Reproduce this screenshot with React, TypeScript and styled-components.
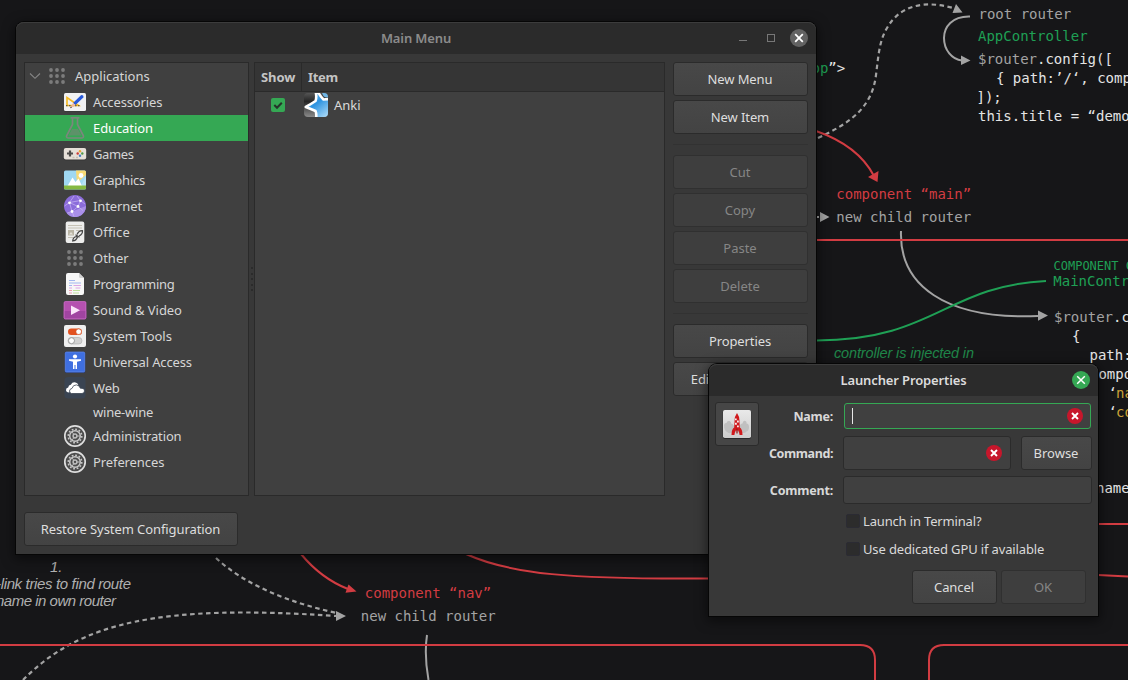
import React from 'react';
import styled, { createGlobalStyle, css } from 'styled-components';

const GlobalStyle = createGlobalStyle`
  * { box-sizing: border-box; }
  html, body { margin: 0; padding: 0; background: #161618; overflow: hidden; }
  body { font-family: "Noto Sans", "Open Sans", sans-serif; font-size: 13px; color: #dadada; }
`;

const Desktop = styled.main`
  position: relative;
  width: 1128px;
  height: 680px;
  overflow: hidden;
  background: #161618;
`;

const Wallpaper = styled.svg`
  display: block;
  width: 1128px;
  height: 680px;
`;

const Window = styled.section<{ $x: number; $y: number; $w: number; $h: number }>`
  position: absolute;
  left: ${p => p.$x}px;
  top: ${p => p.$y}px;
  width: ${p => p.$w}px;
  height: ${p => p.$h}px;
  display: flex;
  flex-direction: column;
  background: #383838;
  border-radius: 8px 8px 0 0;
  box-shadow: 0 0 0 1px #060606, 0 3px 12px 2px rgba(0, 0, 0, 0.5);
`;

const TitleBar = styled.header`
  flex: none;
  height: 32px;
  display: grid;
  grid-template-columns: 1fr auto 1fr;
  align-items: center;
  background: #2b2b2b;
  border-radius: 8px 8px 0 0;
  box-shadow: inset 0 1px 0 #3c3c3c;
`;

const Title = styled.h1<{ $active?: boolean }>`
  grid-column: 2;
  margin: 0;
  font-size: 13px;
  line-height: 18px;
  font-weight: 600;
  letter-spacing: -0.13px;
  color: ${p => (p.$active ? '#dcdcdc' : '#8b8b8b')};
`;

const TitleButtons = styled.div`
  display: flex;
  justify-content: flex-end;
  align-items: center;
  gap: 3px;
  padding-right: 7px;
  svg { display: block; }
`;

const Text = styled.span<{ $track?: number }>`
  white-space: nowrap;
  line-height: 18px;
  letter-spacing: ${p => p.$track ?? 0}px;
`;

const Button = styled.button<{ $w: number; $off?: boolean }>`
  flex: none;
  width: ${p => p.$w}px;
  height: 34px;
  padding: 0 1px 0 0;
  display: flex;
  align-items: center;
  justify-content: center;
  font: inherit;
  color: #dedede;
  border: 1px solid #2b2b2b;
  border-radius: 3px;
  background: linear-gradient(#484848, #434343);
  ${p => p.$off && css`
    color: #868686;
    background: #3e3e3e;
    border-color: #303030;
  `}
`;

const MainBody = styled.div`
  flex: 1;
  display: flex;
  flex-direction: column;
  align-items: flex-start;
  gap: 16px;
  padding: 8px 8px 8px;
`;

const Columns = styled.div`
  display: flex;
  width: 100%;
  height: 434px;
`;

const Pane = styled.div<{ $w: number }>`
  width: ${p => p.$w}px;
  height: 434px;
  border: 1px solid #2a2a2a;
  background: #404040;
`;

const Handle = styled.div`
  width: 5px;
  display: flex;
  flex-direction: column;
  align-items: center;
  justify-content: center;
  gap: 3.5px;
  padding-left: 1px;
`;

const HandleDot = styled.i`
  width: 2px;
  height: 2px;
  background: #2b2b2b;
`;

const TreeRow = styled.div<{ $h?: number; $selected?: boolean; $root?: boolean }>`
  display: flex;
  align-items: center;
  height: ${p => p.$h ?? 26}px;
  padding-left: ${p => (p.$root ? 4 : 38)}px;
  gap: 6px;
  color: ${p => (p.$selected ? '#ffffff' : '#d6d6d6')};
  background: ${p => (p.$selected ? '#35a854' : 'transparent')};
  svg { display: block; flex: none; }
  svg + svg { margin-left: -2px; }
`;

const IconGap = styled.span`
  width: 24px;
`;

const ListHead = styled.div`
  display: flex;
  height: 29px;
  background: #353535;
  border-bottom: 1px solid #2a2a2a;
  font-weight: 700;
  color: #c4c4c4;
`;

const HeadCell = styled.div<{ $w?: number }>`
  width: ${p => (p.$w ? p.$w + 'px' : 'auto')};
  display: flex;
  align-items: center;
  padding-left: 6px;
  border-right: ${p => (p.$w ? '1px solid #2a2a2a' : 'none')};
`;

const ListRow = styled.div`
  display: flex;
  align-items: center;
  height: 26px;
  padding-left: 16px;
  svg { display: block; }
  svg + svg { margin: 0 6px 0 19px; }
`;

const Actions = styled.div`
  display: flex;
  flex-direction: column;
  gap: 4px;
  margin-left: 8px;
`;

const Separator = styled.hr`
  width: 135px;
  height: 1px;
  margin: 6px 0;
  border: 0;
  background: #323232;
`;

const DialogBody = styled.div`
  flex: 1;
  display: grid;
  grid-template-columns: 44px 74px 249px;
  grid-template-rows: 28px 34px 28px;
  column-gap: 0;
  row-gap: 6px;
  padding: 6px;
  align-content: start;
`;

const IconButton = styled.button`
  grid-row: 1 / span 2;
  width: 44px;
  height: 44px;
  padding: 0;
  display: flex;
  align-items: center;
  justify-content: center;
  border: 1px solid #2b2b2b;
  border-radius: 3px;
  background: #464646;
`;

const FieldLabel = styled.label`
  grid-column: 2;
  align-self: center;
  justify-self: end;
  padding-top: 1px;
  font-weight: 700;
  font-size: 12.5px;
  color: #d8d8d8;
`;

const FieldRow = styled.div`
  grid-column: 3;
  margin-left: 10px;
  width: 249px;
  display: flex;
  justify-content: space-between;
`;

const Field = styled.div<{ $w: number; $h: number; $focus?: boolean }>`
  width: ${p => p.$w}px;
  height: ${p => (p.$focus ? p.$h - 2 : p.$h)}px;
  margin: ${p => (p.$focus ? '1px' : '0')};
  padding: 0 ${p => (p.$focus ? 7 : 8)}px;
  display: flex;
  align-items: center;
  justify-content: flex-end;
  border: 1px solid ${p => (p.$focus ? '#35a854' : '#2b2b2b')};
  border-radius: 3px;
  background: #404040;
`;

const Caret = styled.span`
  width: 1px;
  height: 16px;
  margin-right: auto;
  background: #e8e8e8;
`;

const Options = styled.div`
  grid-column: 3;
  display: flex;
  flex-direction: column;
  gap: 10px;
  padding: 2px 0 0 13px;
`;

const Option = styled.label`
  display: flex;
  align-items: center;
  gap: 3px;
  height: 18px;
`;

const Box = styled.span`
  width: 14px;
  height: 14px;
  border-radius: 2px;
  border: 1px solid #2b2b33;
  background: #2c2c2c;
`;

const DialogFooter = styled.footer`
  display: flex;
  justify-content: flex-end;
  gap: 4px;
  padding: 0 12px 12px;
`;

/* Small drawings ------------------------------------------------------- */

const CloseGlyph = ({ fill, weight }: { fill: string; weight: number }) => (
  <svg width="20" height="20" viewBox="0 0 20 20">
    <circle cx="10" cy="10" r="9" fill={fill} />
    <path d="M6.200 6.200l7.600 7.600M13.800 6.200l-7.600 7.600" stroke="#fff" strokeWidth={weight} />
  </svg>
);

const ErrorGlyph = () => (
  <svg width="16" height="16" viewBox="0 0 16 16">
    <circle cx="8" cy="8" r="8" fill="#c7162b" />
    <path d="M5 5l6 6M11 5l-6 6" stroke="#fff" strokeWidth="1.9" />
  </svg>
);

const DotGrid = () => (
  <svg width="24" height="24" viewBox="0 0 24 24" fill="#7c7c7c">
    {[6, 12, 18].map(y => [6, 12, 18].map(x => <circle key={`${x}-${y}`} cx={x} cy={y} r="1.9" />))}
  </svg>
);

const Gear = () => (
  <svg width="24" height="24" viewBox="0 0 24 24" fill="none">
    <circle cx="12" cy="12" r="10.2" fill="#4c4c4c" stroke="#dedede" strokeWidth="1.7" />
    <circle cx="12" cy="12" r="5.3" stroke="#c9c9c9" strokeWidth="1.5" />
    <circle cx="12" cy="12" r="6.8" stroke="#c9c9c9" strokeWidth="1.5" strokeDasharray="1.78 1.78" />
    <circle cx="12" cy="12" r="1.9" stroke="#bdbdbd" strokeWidth="1.5" />
    <path d="M9.300 8l1.500 2.500M9.300 16l1.500-2.500M14 12h3.5" stroke="#bdbdbd" strokeWidth="1" />
  </svg>
);

const Frame = ({ children }: { children: React.ReactNode }) => (
  <svg width="24" height="24" viewBox="0 0 24 24" fill="none">{children}</svg>
);

const icons: Record<string, React.ReactNode> = {
  accessories: (
    <Frame>
      <rect x="1" y="3.5" width="22" height="18" rx="1.5" fill="#2d2d2d" opacity=".5" />
      <rect x="1" y="3" width="22" height="18" rx="1.5" fill="#f1f1f2" />
      <path d="M4 7.5v8h11.5z" stroke="#f5b91f" strokeWidth="1.6" />
      <path d="M3 15.7h15" stroke="#444" strokeWidth="1" strokeDasharray="1.5 1.5" />
      <path d="M10 13L18 5.2q2.5-.5 2.6 2L12.5 15z" fill="#2759dc" />
      <path d="M10 13l2.5 2.2L7 18.2z" fill="#f3b79a" />
      <path d="M8 16.5l-1 1.8 2-.7z" fill="#383838" />
    </Frame>
  ),
  education: (
    <Frame>
      <path d="M9 13h6l3.500 6.500H5.500z" fill="#5d9269" />
      <path d="M9.500 2v6.500L3.700 19.500Q2.900 22 5.500 22h13q2.600 0 1.800-2.500L14.500 8.500V2" stroke="#7b877d" strokeWidth="1.700" />
      <path d="M7.500 1.800h9" stroke="#7b877d" strokeWidth="1.700" />
    </Frame>
  ),
  games: (
    <Frame>
      <rect x=".8" y="6.5" width="22.400" height="12" rx="2" fill="#2a2a2a" opacity=".5" />
      <rect x=".8" y="6" width="22.400" height="11.500" rx="2" fill="#e6e0d8" />
      <path d="M4 11.500h6M7 8.500v6" stroke="#4e4c4a" strokeWidth="2.200" />
      <circle cx="17" cy="9.200" r="1.200" fill="#eaa632" />
      <circle cx="14.700" cy="11.500" r="1.200" fill="#cf3a35" />
      <circle cx="19.300" cy="11.500" r="1.200" fill="#4f9a48" />
      <circle cx="17" cy="13.800" r="1.200" fill="#477cc3" />
      <path d="M9.500 15.500h2M13 15.500h2" stroke="#c6bfb3" strokeWidth="1.500" />
    </Frame>
  ),
  graphics: (
    <Frame>
      <rect x="1" y="2.500" width="22" height="19" rx="1.500" fill="#9fd8f2" />
      <path d="M13 2.500h8.500q1.500 0 1.500 1.500v3L14 15z" fill="#f8da74" />
      <path d="M18 18L23 8v10z" fill="#b7e1f5" />
      <circle cx="18" cy="7.500" r="2.400" fill="#fff" />
      <path d="M4.500 18l5-8.500 3 4.500 3-3.500L19 18z" fill="#fff" />
      <path d="M1 17.500h22V20q0 1.500-1.500 1.500h-19Q1 21.500 1 20z" fill="#86b942" />
    </Frame>
  ),
  internet: (
    <Frame>
      <circle cx="12" cy="12" r="11" fill="#8b6cda" />
      <path d="M23 12a11 11 0 0 1-19 7.500z" fill="#a98fe8" />
      <path d="M6.500 8.500l11-2-2.500 6zM6.500 8.500L9 17.500l6-5 5 4M1.500 12l5-3.500L11 2M17.500 6.500L22 10M9 17.500l2 5M17.500 6.500L14 2M9 17.500l-5 1.500" stroke="#c9b6f4" strokeWidth=".7" />
      <circle cx="6.500" cy="8.800" r="1.400" fill="#fff" />
      <circle cx="17.500" cy="6.800" r="1.400" fill="#fff" />
      <circle cx="15" cy="12.500" r="1.400" fill="#fff" />
      <circle cx="9" cy="17.500" r="1.400" fill="#fff" />
    </Frame>
  ),
  office: (
    <Frame>
      <rect x="2.700" y="1.500" width="18.600" height="21.500" rx="2" fill="#ededec" />
      <path d="M5 5.500h14M5 8h14M13 10.500h6M5 17.500h5" stroke="#c5c1b4" strokeWidth="1.100" />
      <rect x="5" y="10" width="6" height="5.500" fill="#bab5a5" />
      <path d="M6 14.500l2-2.500 2 2.500z" fill="#e5e2d8" />
      <path d="M14 14.500q2-4 5.500-3.800.3 3.300-3.500 5.300M13.500 16.500q-3.500.5-3.800 4.500 3.500-.3 4.800-4z" stroke="#454545" strokeWidth="1.200" />
      <path d="M12.500 14.800l4 2.400" stroke="#454545" strokeWidth="1.200" />
    </Frame>
  ),
  programming: (
    <Frame>
      <path d="M3 3q0-2 2-2h11l5 5v15q0 2-2 2H5q-2 0-2-2z" fill="#f7f7f7" />
      <path d="M16 1v3.500q0 1.500 1.500 1.500H21z" fill="#d2d2d2" />
      <path d="M6 8.500h6M6 11h12M6 13.500h3" stroke="#a1b7ef" />
      <path d="M10.500 13.500h7.500M6 16h3M12.500 16h5" stroke="#dda6e5" />
      <path d="M6 18.500h3M6 21h3" stroke="#ed9fae" />
      <path d="M10 18.500h7M10 21h6" stroke="#bfdf9c" />
    </Frame>
  ),
  sound: (
    <Frame>
      <rect x=".8" y="3.200" width="22.400" height="18" rx="1.500" fill="#b551b0" />
      <path d="M.8 13h22.400v6.700q0 1.500-1.500 1.500H2.300q-1.500 0-1.500-1.500z" fill="#a044a1" />
      <rect x="1.200" y="3.600" width="21.600" height="17.200" rx="1.200" stroke="#cb6ec4" strokeWidth=".7" />
      <path d="M8 7.500v9.500l9-4.700z" fill="#fae6fa" />
    </Frame>
  ),
  system: (
    <Frame>
      <rect x="1" y="1" width="22" height="22" rx="2" fill="#efefef" />
      <rect x="5" y="4.500" width="14" height="6.500" rx="3.250" fill="#e2511f" />
      <circle cx="15.700" cy="7.700" r="2.800" fill="#fff" stroke="#c94a1e" strokeWidth=".6" />
      <rect x="5" y="13.500" width="14" height="6.500" rx="3.250" fill="#d2d2d2" stroke="#aaa" strokeWidth=".6" />
      <circle cx="8.500" cy="16.700" r="3" fill="#fcfcfc" stroke="#8c8c8c" strokeWidth=".8" />
    </Frame>
  ),
  access: (
    <Frame>
      <rect x="1.800" y="1.800" width="20.400" height="21" rx="1.500" fill="#203c8c" />
      <rect x="2.300" y="2" width="19.400" height="20" rx="1.200" fill="#3f6fe0" stroke="#6c90ea" strokeWidth=".6" />
      <circle cx="12" cy="6.500" r="2.100" fill="#fff" />
      <path d="M6 9.300h12v1.500l-4 .9V19h-1.500v-4h-1v4H10v-7.300l-4-.9z" fill="#fff" />
    </Frame>
  ),
  web: (
    <Frame>
      <rect x="1.500" y="1" width="21" height="21.500" rx="3.500" fill="#3a4452" />
      <path d="M6 16.500q-3-.3-3-2.600 0-2.100 2.200-2.400.3-2.500 2.600-2.800Q9.500 5.700 12.500 6.500q2 .5 2.800 2.300" fill="#fff" />
      <path d="M8.500 17.500q-2-.5-2-2.500t2.500-2.600q1-3.700 4.500-3.500 3 .3 3.800 3.300 4.200-.2 4.200 2.800 0 2.200-2.500 2.500z" fill="#fff" stroke="#3a4452" strokeWidth=".8" />
    </Frame>
  ),
};

const AnkiIcon = () => (
  <svg width="24" height="24" viewBox="0 0 24 24">
    <defs>
      <clipPath id="anki-clip"><rect width="24" height="24" rx="4" /></clipPath>
      <linearGradient id="anki-sky" x1="0" y1="0" x2=".7" y2="1">
        <stop offset="0" stopColor="#8ccaf2" />
        <stop offset=".5" stopColor="#2d93e0" />
        <stop offset="1" stopColor="#a5d6f6" />
      </linearGradient>
      <linearGradient id="anki-dark" x1="0" y1="0" x2="0" y2="1">
        <stop offset="0" stopColor="#555" />
        <stop offset=".35" stopColor="#252525" />
        <stop offset="1" stopColor="#8b8b8b" />
      </linearGradient>
    </defs>
    <g clipPath="url(#anki-clip)">
      <rect width="24" height="24" fill="url(#anki-dark)" />
      <path d="M11.500-2Q13 4 11.500 8Q7 11 1.800 14Q7 16 11.500 18Q12.800 21 12 26H26V6L19.500 6.500Q16 3 13.500-2z" fill="url(#anki-sky)" stroke="#fff" strokeWidth="2.600" strokeLinejoin="round" />
      <path d="M17.500-2Q18.500 3 21 4.300L26 4.500V-2z" fill="#6fb5e4" />
    </g>
  </svg>
);

const RocketIcon = () => (
  <svg width="30" height="30" viewBox="0 0 30 30">
    <defs>
      <linearGradient id="rocket-bg" x1="0" y1="0" x2="0" y2="1">
        <stop offset="0" stopColor="#e9e9e9" />
        <stop offset="1" stopColor="#cdcdcd" />
      </linearGradient>
    </defs>
    <rect x=".8" y="1.300" width="28.400" height="28.500" rx="2" fill="#222" />
    <rect x="1" y="1" width="28" height="28" rx="1.800" fill="url(#rocket-bg)" />
    <path d="M2 16q.5-2.500 2.500-2 .5-2.500 3-2 2 .5 1.500 2.500 2 0 2.500 2h6.500q.5-2 2.500-2 .5-3.500 3-2.500 1.500.5 1 2.500 2.500 0 2.500 3.500 0 4-2.500 4.500-2 2.500-5 1H9.500q-3 1.500-4.500-.5-3-1.500-3-7z" fill="#c0c0c0" />
    <path d="M15 4q2.400 3.500 2.400 7l.4 7.500q2.700 1.500 2.700 7.500h-2.900q-.3-3-1.400-4.500h-2.400q-1.100 1.500-1.400 4.500H9.500q0-6 2.700-7.500L12.600 11q0-3.500 2.400-7z" fill="#d0191c" />
    <path d="M13 9.500h1.700v1.800H13zM15 11.500h1.800v2H15zM13 13.800h1.800v1.900H13zM15 16.500h1.800v1.700H15z" fill="#f7ecec" />
    <path d="M15 19.500v5" stroke="#9c1416" strokeWidth="1.200" />
  </svg>
);

const Chevron = () => (
  <svg width="12" height="12" viewBox="0 0 12 12" fill="none">
    <path d="M1 3.500l5 4.800 5-4.800" stroke="#858585" strokeWidth="1.100" />
  </svg>
);

const CheckMark = () => (
  <svg width="14" height="14" viewBox="0 0 14 14">
    <rect width="14" height="14" rx="2" fill="#35a854" />
    <path d="M3.300 7l2.700 2.700 4.800-5" stroke="#25332a" strokeWidth="2" fill="none" />
  </svg>
);

/* Backdrop ------------------------------------------------------------- */

const MONO = '"DejaVu Sans Mono", monospace';
const GREY = '#a3a3a3';
const RED = '#d23c42';
const GREEN = '#1fa055';
const WHITE = '#e4e4e4';
const GOLD = '#cda237';

type Word = { x: number; y: number; t: string; c: string; s?: number; rest?: string };

const words: Word[] = [
  { x: 978.500, y: 18.500, t: 'root router', c: GREY },
  { x: 978, y: 41, t: 'AppController', c: GREEN },
  { x: 978, y: 64, t: '$router', rest: '.config([', c: GREY },
  { x: 996, y: 83, t: '{ path:’/‘, comp', c: WHITE },
  { x: 976.500, y: 102, t: ']);', c: WHITE },
  { x: 978, y: 121, t: 'this.title = “demo', c: WHITE },
  { x: 811.500, y: 72.500, t: 'pp', rest: '”>', c: GREEN },
  { x: 836.300, y: 199, t: 'component “main”', c: RED },
  { x: 836.300, y: 221.500, t: 'new child router', c: GREY },
  { x: 1053.500, y: 270, t: 'COMPONENT C', c: GREEN, s: 12 },
  { x: 1053.300, y: 285.500, t: 'MainContro', c: GREEN },
  { x: 1054, y: 321.500, t: '$router', rest: '.co', c: GREY },
  { x: 1072, y: 341, t: '{', c: WHITE },
  { x: 1089.500, y: 360, t: 'path:', c: WHITE },
  { x: 1090, y: 379, t: 'compo', c: WHITE },
  { x: 1108.500, y: 398, t: '‘', c: WHITE },
  { x: 1116, y: 398, t: 'na', c: GOLD },
  { x: 1108.500, y: 416.500, t: '‘', c: WHITE },
  { x: 1116, y: 416.500, t: 'co', c: GOLD },
  { x: 1096, y: 492.500, t: 'name', c: WHITE },
  { x: 364.800, y: 597.500, t: 'component “nav”', c: RED },
  { x: 360.800, y: 620.500, t: 'new child router', c: GREY },
];

const Backdrop = () => (
  <Wallpaper viewBox="0 0 1128 680" fill="none">
    <g stroke={GREY} strokeWidth="2.200" strokeDasharray="4.500 3.500">
      <path d="M818 138C850 123 872 108 876 75C879 50 880 40 887 28C900 5 925 0 953 8" />
      <path d="M216 558C245 585 290 603 337 613" />
      <path d="M23 680C80 622 160 604 336 616" />
    </g>
    <g stroke={GREY} strokeWidth="2">
      <path d="M970 16.500C952 16 944 27 944 38C944 50 952 59.500 962 60.500" />
      <path d="M901 231C899 285 945 320 1038 316" />
      <path d="M427 635Q424 655 428.500 680" />
      <path d="M817 217h2" />
    </g>
    <g fill={GREY}>
      <path d="M956 4l6.500 8.500-10 .5zM961 55.500l9.500 5-9.500 4.500zM820 212l9.500 5-9.500 5zM1038 310.500l10 5-10 5.300zM336 611l10 5-10 5z" />
    </g>
    <g stroke={RED} strokeWidth="2">
      <path d="M816 131C842 140 862 153 874 176" />
      <path d="M816 240H1128" />
      <path d="M301 554C315 571 330 582 348 589" />
      <path d="M466 554C510 574 570 579.500 709 578.500" />
      <path d="M1098 524H1128M1098 575L1128 576.500" />
      <path d="M0 645H860Q875 645 875 660V680M929 680V660Q929 645 944 645H1128" />
    </g>
    <path d="M868 177L877.500 182 878.500 171zM345.500 592.800L356.500 591.500 348.500 584.500z" fill={RED} />
    <path d="M816 340.500C935 340.500 945 286 1046 281" stroke={GREEN} strokeWidth="2" />
    <g fontFamily={MONO}>
      {words.map((w, i) => (
        <text key={i} x={w.x} y={w.y} fontSize={w.s ?? 14} fill={w.c}>
          {w.t}
          {w.rest && <tspan fill={WHITE}>{w.rest}</tspan>}
        </text>
      ))}
    </g>
    <g fontFamily='"Liberation Sans", sans-serif' fontStyle="italic" fontSize="15">
      <text x="834" y="357.500" textLength="140" fill="#20874a" fontSize="14.500">controller is injected in</text>
      <g fill="#b0b0b0">
        <text x="50" y="572">1.</text>
        <text x="-4" y="589" textLength="135">-link tries to find route</text>
        <text x="-4" y="606" textLength="120">name in own router</text>
      </g>
    </g>
  </Wallpaper>
);

const categories: { icon?: React.ReactNode; name: string; track?: number; h?: number }[] = [
  { icon: icons.accessories, name: 'Accessories', track: -0.12 },
  { icon: icons.education, name: 'Education', track: -0.1 },
  { icon: icons.games, name: 'Games', track: -0.4 },
  { icon: icons.graphics, name: 'Graphics', track: -0.2 },
  { icon: icons.internet, name: 'Internet', track: -0.1 },
  { icon: icons.office, name: 'Office', track: 0.15 },
  { icon: <DotGrid />, name: 'Other' },
  { icon: icons.programming, name: 'Programming', track: -0.33 },
  { icon: icons.sound, name: 'Sound & Video', track: -0.06 },
  { icon: icons.system, name: 'System Tools', track: -0.03 },
  { icon: icons.access, name: 'Universal Access', track: -0.13 },
  { icon: icons.web, name: 'Web', track: -0.2 },
  { name: 'wine-wine', track: -0.22, h: 22 },
  { icon: <Gear />, name: 'Administration', track: -0.14 },
  { icon: <Gear />, name: 'Preferences', track: -0.1 },
];

const ActionButton = ({ label, off, track }: { label: string; off?: boolean; track?: number }) => (
  <Button $w={135} $off={off} disabled={off}><Text $track={track}>{label}</Text></Button>
);

export default function App() {
  return (
    <Desktop>
      <GlobalStyle />
      <Backdrop />

      <Window $x={16} $y={22} $w={800} $h={532}>
        <TitleBar>
          <Title>Main Menu</Title>
          <TitleButtons>
            <svg width="56" height="20" viewBox="0 0 56 20" fill="none" stroke="#777">
              <path d="M9 12.500h8" />
              <rect x="37.500" y="6.500" width="7" height="7" />
            </svg>
            <CloseGlyph fill="#626262" weight={1.8} />
          </TitleButtons>
        </TitleBar>
        <MainBody>
          <Columns>
            <Pane $w={225}>
              <TreeRow $root>
                <Chevron />
                <DotGrid />
                <Text>Applications</Text>
              </TreeRow>
              {categories.map(c => (
                <TreeRow key={c.name} $h={c.h} $selected={c.name === 'Education'}>
                  {c.icon ?? <IconGap />}
                  <Text $track={c.track}>{c.name}</Text>
                </TreeRow>
              ))}
            </Pane>
            <Handle>
              <HandleDot /><HandleDot /><HandleDot /><HandleDot /><HandleDot />
            </Handle>
            <Pane $w={411}>
              <ListHead>
                <HeadCell $w={47}><Text $track={-0.1}>Show</Text></HeadCell>
                <HeadCell><Text $track={-0.3}>Item</Text></HeadCell>
              </ListHead>
              <ListRow>
                <CheckMark />
                <AnkiIcon />
                <Text>Anki</Text>
              </ListRow>
            </Pane>
            <Actions>
              <ActionButton label="New Menu" track={-0.1} />
              <ActionButton label="New Item" track={-0.1} />
              <Separator />
              <ActionButton label="Cut" off />
              <ActionButton label="Copy" off />
              <ActionButton label="Paste" off />
              <ActionButton label="Delete" off />
              <Separator />
              <ActionButton label="Properties" track={-0.1} />
              <ActionButton label="Edit Properties…" track={-0.1} />
            </Actions>
          </Columns>
          <Button $w={214}><Text $track={-0.08}>Restore System Configuration</Text></Button>
        </MainBody>
      </Window>

      <Window $x={709} $y={364} $w={389} $h={252}>
        <TitleBar>
          <Title $active>Launcher Properties</Title>
          <TitleButtons><CloseGlyph fill="#35a854" weight={1.5} /></TitleButtons>
        </TitleBar>
        <DialogBody>
          <IconButton><RocketIcon /></IconButton>
          <FieldLabel><Text $track={-0.25}>Name:</Text></FieldLabel>
          <FieldRow>
            <Field $w={247} $h={28} $focus><Caret /><ErrorGlyph /></Field>
          </FieldRow>
          <FieldLabel><Text $track={-0.4}>Command:</Text></FieldLabel>
          <FieldRow>
            <Field $w={168} $h={34}><ErrorGlyph /></Field>
            <Button $w={71}><Text>Browse</Text></Button>
          </FieldRow>
          <FieldLabel><Text $track={-0.2}>Comment:</Text></FieldLabel>
          <FieldRow><Field $w={249} $h={28} /></FieldRow>
          <Options>
            <Option><Box /><Text $track={-0.16}>Launch in Terminal?</Text></Option>
            <Option><Box /><Text $track={-0.14}>Use dedicated GPU if available</Text></Option>
          </Options>
        </DialogBody>
        <DialogFooter>
          <Button $w={85}><Text $track={-0.1}>Cancel</Text></Button>
          <Button $w={85} $off disabled><Text>OK</Text></Button>
        </DialogFooter>
      </Window>
    </Desktop>
  );
}
